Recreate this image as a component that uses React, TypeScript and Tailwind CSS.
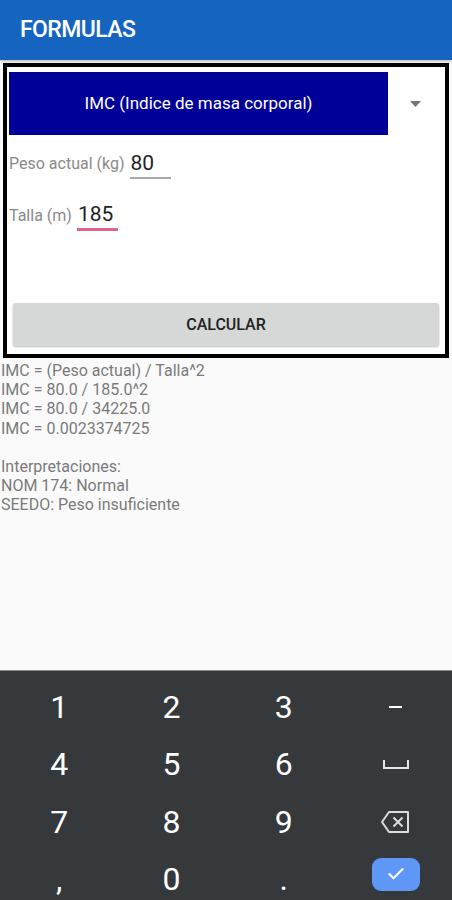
import { Check } from "lucide-react";

const font = { fontFamily: "Roboto, 'Noto Sans', sans-serif" };

function Key({ children }: { children: React.ReactNode }) {
  return (
    <div className="flex h-[57.5px] items-center justify-center text-[32px] leading-none text-white">
      {children}
    </div>
  );
}

function Keyboard() {
  return (
    <div className="h-[230px] shrink-0 overflow-hidden border-t border-[#8a8d90] bg-[#35393c] pt-[7px]">
      <div className="grid grid-cols-4 pl-[3px]">
        <Key>1</Key>
        <Key>2</Key>
        <Key>3</Key>
        <Key>
          <span className="block h-[2px] w-[13px] bg-white" />
        </Key>
        <Key>4</Key>
        <Key>5</Key>
        <Key>6</Key>
        <Key>
          <svg width="28" height="12" viewBox="0 0 28 12" fill="none" stroke="#e6e6e6" strokeWidth="2">
            <path d="M2 2v8h24V2" />
          </svg>
        </Key>
        <Key>7</Key>
        <Key>8</Key>
        <Key>9</Key>
        <Key>
          <svg width="31" height="24" viewBox="0 0 31 24" fill="none" stroke="#dcdcdc" strokeWidth="2" strokeLinejoin="round">
            <path d="M9 2h19v20H9L2 12z" />
            <path d="M13.5 7.5l9 9M22.5 7.5l-9 9" />
          </svg>
        </Key>
        <Key>,</Key>
        <Key>0</Key>
        <Key>.</Key>
        <Key>
          <span className="-mt-[10px] flex h-[33px] w-[48px] items-center justify-center rounded-[9px] bg-[#5e97f6]">
            <Check size={20} strokeWidth={2.5} className="text-white" />
          </span>
        </Key>
      </div>
    </div>
  );
}

export default function App() {
  return (
    <div className="flex h-[900px] w-[452px] flex-col overflow-hidden bg-[#fafafa]" style={font}>
      <header className="flex h-[60px] shrink-0 items-center bg-[#1565c0] px-5 shadow-[0_1px_3px_rgba(0,0,0,0.3)]">
        <h1 className="text-[23px] font-medium tracking-tight text-white">FORMULAS</h1>
      </header>

      <main className="flex-1 pt-[3px] pl-[3px] pr-[3px]">
        <section className="flex h-[295px] flex-col border-4 border-black bg-white px-[2px] pt-[5px] pb-[8px]">
          <div className="flex items-center">
            <div className="flex h-[63px] w-[379px] items-center justify-center bg-[#000099] text-[17px] text-white">
              IMC (Indice de masa corporal)
            </div>
            <div className="flex flex-1 justify-center">
              <svg width="11" height="6" viewBox="0 0 11 6">
                <path d="M0 0h11L5.5 6z" fill="#757575" />
              </svg>
            </div>
          </div>

          <div className="mt-[13px] flex items-center gap-[5px]">
            <span className="text-[16px] text-[#8a8a8a]">Peso actual (kg)</span>
            <div className="flex h-[31px] w-[41px] items-end border-b-2 border-[#a8a8a8] pb-[3px] text-[21px] leading-none text-[#222]">
              <span className="pl-[1px]">80</span>
            </div>
          </div>

          <div className="mt-[21px] flex items-center gap-[5px]">
            <span className="text-[16px] text-[#8a8a8a]">Talla (m)</span>
            <div className="flex h-[31px] w-[41px] items-end border-b-[3px] border-[#e0608f] pb-[3px] text-[21px] leading-none text-[#222]">
              <span className="pl-[1px]">185</span>
            </div>
          </div>

          <div className="flex-1" />

          <button className="mx-[4px] h-[43px] rounded-[3px] bg-[#d6d7d7] text-[16px] font-medium text-[#222] shadow-[0_1px_2px_rgba(0,0,0,0.25)]">
            CALCULAR
          </button>
        </section>

        <div className="-ml-[2px] mt-[3px] text-[16px] leading-[19.2px] text-[#7a7a7a]">
          <p>IMC = (Peso actual) / Talla^2</p>
          <p>IMC = 80.0 / 185.0^2</p>
          <p>IMC = 80.0 / 34225.0</p>
          <p>IMC = 0.0023374725</p>
          <p>&nbsp;</p>
          <p>Interpretaciones:</p>
          <p>NOM 174: Normal</p>
          <p>SEEDO: Peso insuficiente</p>
        </div>
      </main>

      <Keyboard />
    </div>
  );
}
